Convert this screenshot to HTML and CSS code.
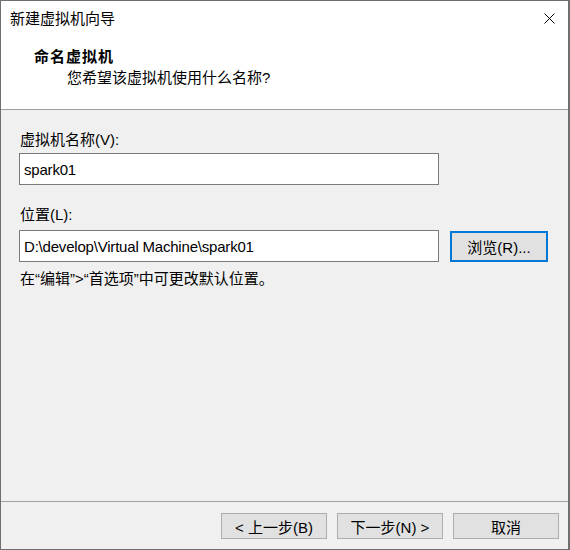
FILE: index.html
```html
<!DOCTYPE html>
<html lang="zh-CN">
<head>
<meta charset="utf-8">
<title>新建虚拟机向导</title>
<link rel="stylesheet" href="styles.css">
</head>
<body>
<div class="window">
  <div class="top">
    <div class="titlebar">
      <span class="title">新建虚拟机向导</span>
      <svg class="close" width="11" height="11" viewBox="0 0 11 11" aria-hidden="true">
        <path d="M0.5 0.5 L10.5 10.5 M10.5 0.5 L0.5 10.5" stroke="#000" stroke-width="1" fill="none"/>
      </svg>
    </div>
    <div class="heading">命名虚拟机</div>
    <div class="subheading">您希望该虚拟机使用什么名称?</div>
  </div>
  <div class="content">
    <div class="label label-first">虚拟机名称(V):</div>
    <div class="field">spark01</div>
    <div class="label label-second">位置(L):</div>
    <div class="row">
      <div class="field field-path">D:\develop\Virtual Machine\spark01</div>
      <div class="btn btn-focus">浏览(R)...</div>
    </div>
    <div class="note">在“编辑”&gt;“首选项”中可更改默认位置。</div>
  </div>
  <div class="footer">
    <div class="btn btn-footer">&lt; 上一步(B)</div>
    <div class="btn btn-footer">下一步(N) &gt;</div>
    <div class="btn btn-footer">取消</div>
  </div>
</div>
</body>
</html>
```
FILE: styles.css
```css
* { box-sizing: border-box; }
html, body { margin: 0; padding: 0; }
body {
  width: 570px;
  height: 550px;
  font-family: "Liberation Sans", "Noto Sans CJK SC", sans-serif;
  font-size: 15px;
  color: #000;
  background: #f0f0f0;
}
.window {
  width: 570px;
  height: 550px;
  border: 1px solid #6f6f6f;
  border-right-width: 2px;
  display: flex;
  flex-direction: column;
  background: #f0f0f0;
}
.top {
  background: #fff;
  height: 109px;
  border-bottom: 1px solid #a0a0a0;
  flex: none;
}
.titlebar {
  height: 35px;
  display: flex;
  align-items: center;
  justify-content: space-between;
  padding: 0 13px 0 9px;
}
.title { line-height: 20px; }
.close { display: block; }
.heading {
  margin-top: 10px;
  padding-left: 33px;
  line-height: 21px;
  font-weight: bold;
  letter-spacing: 1px;
}
.subheading {
  padding-left: 66px;
  line-height: 21px;
}
.content {
  flex: 1;
  padding: 20px 0 0 18px;
}
.label { line-height: 20px; padding-left: 1px; }
.label-first { margin-top: 0; margin-bottom: 3px; }
.label-second { margin-top: 20px; margin-bottom: 5px; }
.field {
  width: 420px;
  height: 32px;
  background: #fff;
  border: 1px solid #7a7a7a;
  padding-left: 4px;
  display: flex;
  align-items: center;
  letter-spacing: -0.2px;
}
.row {
  display: flex;
  align-items: center;
  gap: 11px;
}
.btn {
  background: #e1e1e1;
  border: 1px solid #adadad;
  display: flex;
  align-items: center;
  justify-content: center;
}
.btn-focus {
  width: 98px;
  height: 31px;
  border: 2px solid #0078d7;
}
.note {
  margin-top: 7px;
  line-height: 20px;
  padding-left: 1px;
}
.footer {
  flex: none;
  height: 48px;
  border-top: 1px solid #a0a0a0;
  display: flex;
  justify-content: flex-end;
  gap: 10px;
  padding: 11px 9px 0 0;
}
.btn-footer {
  width: 106px;
  height: 26px;
}
```
